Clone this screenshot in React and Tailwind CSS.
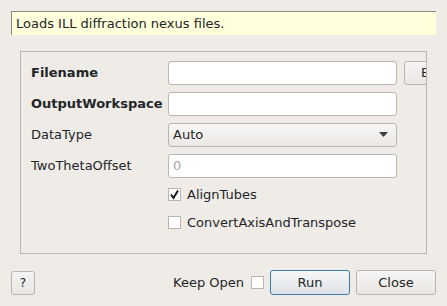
import { useState } from 'react'

function Field({ label, bold, children }) {
    return (
        <div className="flex items-center h-[24px]">
            <div className={'w-[137px] shrink-0 ' + (bold ? 'font-bold' : '')}>{label}</div>
            {children}
        </div>
    )
}

function Check({ checked, label }) {
    return (
        <div className="flex items-center h-[20px] pl-[137px]">
            <div className="w-[13px] h-[13px] border border-[#b8b4b0] bg-white flex items-center justify-center shrink-0">
                {checked && (
                    <svg width="11" height="11" viewBox="0 0 11 11">
                        <path d="M2 5.5 L4.5 9 L9 1.5" fill="none" stroke="#1b1b1b" strokeWidth="2" />
                    </svg>
                )}
            </div>
            <span className="ml-[6px]">{label}</span>
        </div>
    )
}

export default function App() {
    const [keepOpen, setKeepOpen] = useState(false)
    const input = 'w-[229px] h-[24px] shrink-0 rounded-[3px] border border-[#bab5b0] bg-white px-[4px] outline-none'

    return (
        <div className="w-[447px] h-[306px] bg-[#efebe7] text-[#232627] text-[13px] p-[11px] flex flex-col" style={{ fontFamily: '"DejaVu Sans", sans-serif' }}>
            <div className="h-[24px] bg-[#ffffdc] border-t border-l border-[#8c8a87] flex items-center pl-[4px]">
                Loads ILL diffraction nexus files.
            </div>

            <div className="mt-[16px] mx-[9px] h-[204px] border border-[#bab5b0] overflow-hidden pt-[9px] pl-[10px] flex flex-col gap-[7px]">
                <Field label="Filename" bold>
                    <input className={input} />
                    <button className="ml-[7px] w-[80px] h-[24px] shrink-0 rounded-[3px] border border-[#bab5b0] bg-gradient-to-b from-[#f6f5f4] to-[#e9e6e3] text-left pl-[16px]">
                        Browse
                    </button>
                </Field>
                <Field label="OutputWorkspace" bold>
                    <input className={input} />
                </Field>
                <Field label="DataType">
                    <div className="w-[229px] h-[24px] shrink-0 rounded-[3px] border border-[#bab5b0] bg-gradient-to-b from-[#f8f7f6] to-[#ebe8e5] flex items-center justify-between pl-[4px] pr-[8px]">
                        <span>Auto</span>
                        <svg width="9" height="5" viewBox="0 0 9 5">
                            <path d="M0 0 H9 L4.5 5 Z" fill="#3d3d3d" />
                        </svg>
                    </div>
                </Field>
                <Field label="TwoThetaOffset">
                    <input className={input + ' placeholder:text-[#a8a6a4]'} placeholder="0" />
                </Field>
                <div className="flex flex-col gap-[8px]">
                    <Check checked label="AlignTubes" />
                    <Check label="ConvertAxisAndTranspose" />
                </div>
            </div>

            <div className="mt-[16px] flex items-center h-[25px]">
                <button className="w-[24px] h-[24px] rounded-[3px] border border-[#bab5b0] bg-gradient-to-b from-[#f6f5f4] to-[#e9e6e3] text-[12px]">?</button>
                <div className="flex-1" />
                <span>Keep Open</span>
                <button
                    onClick={() => setKeepOpen(!keepOpen)}
                    className="ml-[7px] w-[13px] h-[13px] border border-[#b8b4b0] bg-white"
                />
                <button className="ml-[6px] w-[80px] h-[25px] rounded-[3px] border border-[#3d7bae] bg-gradient-to-b from-[#f5f6f7] to-[#dfe3e7]">Run</button>
                <button className="ml-[6px] w-[80px] h-[25px] rounded-[3px] border border-[#bab5b0] bg-gradient-to-b from-[#f6f5f4] to-[#e9e6e3]">Close</button>
            </div>
        </div>
    )
}
